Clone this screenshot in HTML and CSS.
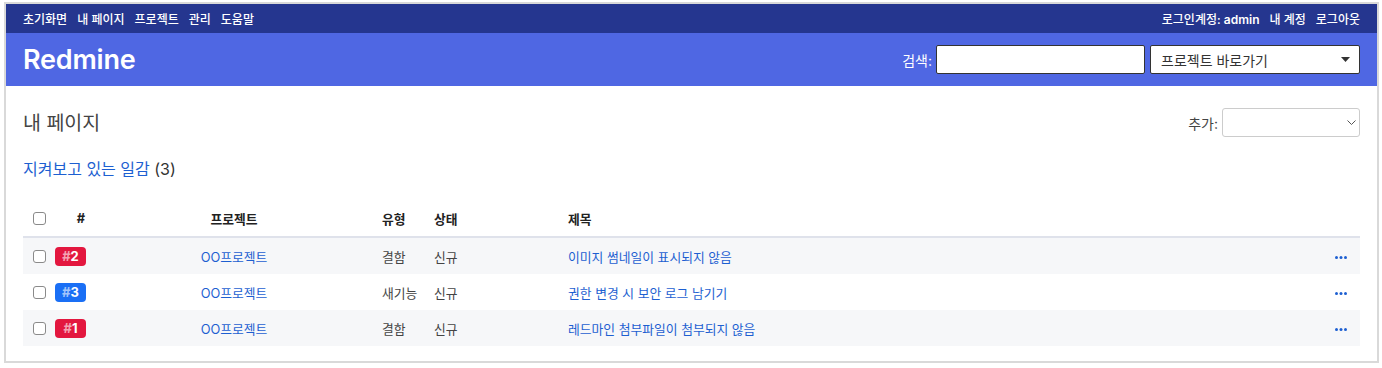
FILE: index.html
```html
<!DOCTYPE html>
<html lang="ko">
<head>
  <meta charset="UTF-8">
  <title>내 페이지 - Redmine</title>
  <link rel="stylesheet" href="styles.css">
</head>
<body>
  <div class="wrapper">
    <!-- Top menu -->
    <div class="top-menu">
      <ul class="menu">
        <li><a href="#">초기화면</a></li>
        <li><a href="#">내 페이지</a></li>
        <li><a href="#">프로젝트</a></li>
        <li><a href="#">관리</a></li>
        <li><a href="#">도움말</a></li>
      </ul>
      <ul class="menu account">
        <li>로그인계정: <b>admin</b></li>
        <li><a href="#">내 계정</a></li>
        <li><a href="#">로그아웃</a></li>
      </ul>
    </div>

    <!-- Header -->
    <div class="header">
      <h1>Redmine</h1>
      <div class="quick-search">
        <label>검색:</label>
        <input type="text" class="search-input">
        <div class="jump-box">
          <span>프로젝트 바로가기</span>
          <svg width="9" height="5" viewBox="0 0 9 5"><path d="M0 0h9L4.5 5z" fill="#333"/></svg>
        </div>
      </div>
    </div>

    <!-- Content -->
    <div class="content">
      <div class="title-row">
        <h2>내 페이지</h2>
        <div class="add-block">
          <label>추가:</label>
          <div class="select-box">
            <svg width="9" height="5" viewBox="0 0 9 5"><path d="M0.5 0.5l4 4 4-4" fill="none" stroke="#555" stroke-width="1"/></svg>
          </div>
        </div>
      </div>

      <h3><a href="#">지켜보고 있는 일감</a> (3)</h3>

      <table class="issues">
        <colgroup>
          <col style="width:32px">
          <col style="width:52px">
          <col style="width:269px">
          <col style="width:52px">
          <col style="width:134px">
          <col>
          <col style="width:40px">
        </colgroup>
        <thead>
          <tr>
            <th class="checkbox"><input type="checkbox"></th>
            <th class="id">#</th>
            <th class="project">프로젝트</th>
            <th>유형</th>
            <th>상태</th>
            <th>제목</th>
            <th></th>
          </tr>
        </thead>
        <tbody>
          <tr class="odd">
            <td class="checkbox"><input type="checkbox"></td>
            <td class="id"><span class="badge bug"><i>#</i>2</span></td>
            <td class="project"><a href="#">OO프로젝트</a></td>
            <td>결함</td>
            <td>신규</td>
            <td><a href="#">이미지 썸네일이 표시되지 않음</a></td>
            <td class="buttons"><svg width="12" height="3" viewBox="0 0 12 3"><circle cx="1.5" cy="1.5" r="1.5"/><circle cx="6" cy="1.5" r="1.5"/><circle cx="10.5" cy="1.5" r="1.5"/></svg></td>
          </tr>
          <tr>
            <td class="checkbox"><input type="checkbox"></td>
            <td class="id"><span class="badge feature"><i>#</i>3</span></td>
            <td class="project"><a href="#">OO프로젝트</a></td>
            <td>새기능</td>
            <td>신규</td>
            <td><a href="#">권한 변경 시 보안 로그 남기기</a></td>
            <td class="buttons"><svg width="12" height="3" viewBox="0 0 12 3"><circle cx="1.5" cy="1.5" r="1.5"/><circle cx="6" cy="1.5" r="1.5"/><circle cx="10.5" cy="1.5" r="1.5"/></svg></td>
          </tr>
          <tr class="odd">
            <td class="checkbox"><input type="checkbox"></td>
            <td class="id"><span class="badge bug"><i>#</i>1</span></td>
            <td class="project"><a href="#">OO프로젝트</a></td>
            <td>결함</td>
            <td>신규</td>
            <td><a href="#">레드마인 첨부파일이 첨부되지 않음</a></td>
            <td class="buttons"><svg width="12" height="3" viewBox="0 0 12 3"><circle cx="1.5" cy="1.5" r="1.5"/><circle cx="6" cy="1.5" r="1.5"/><circle cx="10.5" cy="1.5" r="1.5"/></svg></td>
          </tr>
        </tbody>
      </table>
    </div>
  </div>
</body>
</html>
```

FILE: styles.css
```css
body {
  margin: 0;
  background-color: #ffffff;
  font-family: "Inter", "Noto Sans CJK KR", sans-serif;
  font-size: 12.8px;
  color: #444;
}
a {
  color: #1d5fd1;
  text-decoration: none;
}
.wrapper {
  margin: 2px 3px 5px 4px;
  border: 2px solid #d9d9d9;
}

/* top menu */
.top-menu {
  height: 29px;
  padding: 0 17px;
  background-color: #25368f;
  display: flex;
  justify-content: space-between;
  align-items: center;
}
.menu {
  list-style: none;
  margin: 0;
  padding: 0;
  display: flex;
  gap: 10px;
  font-size: 12px;
  font-weight: 500;
  color: #fff;
}
.menu a {
  color: #fff;
}
.menu b {
  font-weight: 600;
}

/* header */
.header {
  height: 53px;
  padding: 0 17px;
  background-color: #4f67e3;
  display: flex;
  justify-content: space-between;
  align-items: center;
}
.header h1 {
  margin: 0;
  font-size: 27px;
  font-weight: 600;
  color: #fff;
  letter-spacing: -0.2px;
}
.quick-search {
  display: flex;
  align-items: center;
  color: #fff;
  font-size: 14px;
}
.search-input {
  width: 209px;
  height: 29px;
  margin: 0 0 0 4px;
  padding: 0;
  box-sizing: border-box;
  border: 1px solid #333;
  border-radius: 2px;
  background: #fff;
}
.jump-box {
  width: 210px;
  height: 29px;
  margin-left: 5px;
  box-sizing: border-box;
  padding: 0 9px 0 10px;
  border: 1px solid #333;
  border-radius: 2px;
  background: #fff;
  color: #333;
  display: flex;
  align-items: center;
  justify-content: space-between;
}

/* content */
.content {
  padding: 22px 17px 15px;
}
.title-row {
  height: 29px;
  display: flex;
  justify-content: space-between;
  align-items: center;
}
h2 {
  margin: 0 0 3px;
  font-size: 19.5px;
  font-weight: 400;
  color: #444;
}
.add-block {
  display: flex;
  align-items: center;
  gap: 4px;
  font-size: 14px;
  color: #444;
}
.select-box {
  width: 138px;
  height: 29px;
  box-sizing: border-box;
  border: 1px solid #ccc;
  border-radius: 3px;
  display: flex;
  align-items: center;
  justify-content: flex-end;
  padding-right: 3px;
}
h3 {
  margin: 22px 0 0;
  height: 20px;
  line-height: 20px;
  font-size: 16px;
  font-weight: 400;
  color: #333;
}

/* issues table */
.issues {
  margin-top: 21px;
  width: 100%;
  table-layout: fixed;
  border-collapse: collapse;
}
.issues th {
  height: 36px;
  padding: 0 0 0 6px;
  text-align: left;
  font-weight: 700;
  color: #222;
  border-bottom: 2px solid #dfe2eb;
}
.issues td {
  height: 36px;
  padding: 0 0 0 6px;
  white-space: nowrap;
}
.issues tr.odd td {
  background-color: #f6f7f9;
}
.issues .checkbox {
  padding-left: 10px;
}
.issues th.id {
  text-align: center;
  padding-left: 0;
}
.issues td.id {
  padding-left: 0;
}
.issues .project {
  text-align: center;
  padding: 0 15px 0 0;
}
.issues td.buttons {
  text-align: right;
  padding-right: 13px;
}
.buttons svg {
  fill: #1d5fd1;
  vertical-align: middle;
}
input[type="checkbox"] {
  appearance: none;
  width: 13px;
  height: 13px;
  margin: 0;
  display: block;
  border: 1px solid #8a8a8a;
  border-radius: 3px;
  background: #fff;
}
.badge {
  display: inline-block;
  width: 31px;
  height: 19px;
  line-height: 19px;
  border-radius: 4px;
  text-align: center;
  color: #fff;
  font-weight: 700;
  font-size: 13px;
}
.badge i {
  font-style: normal;
  opacity: 0.6;
}
.badge.bug {
  background-color: #e3173f;
}
.badge.feature {
  background-color: #1a6ff5;
}
```
